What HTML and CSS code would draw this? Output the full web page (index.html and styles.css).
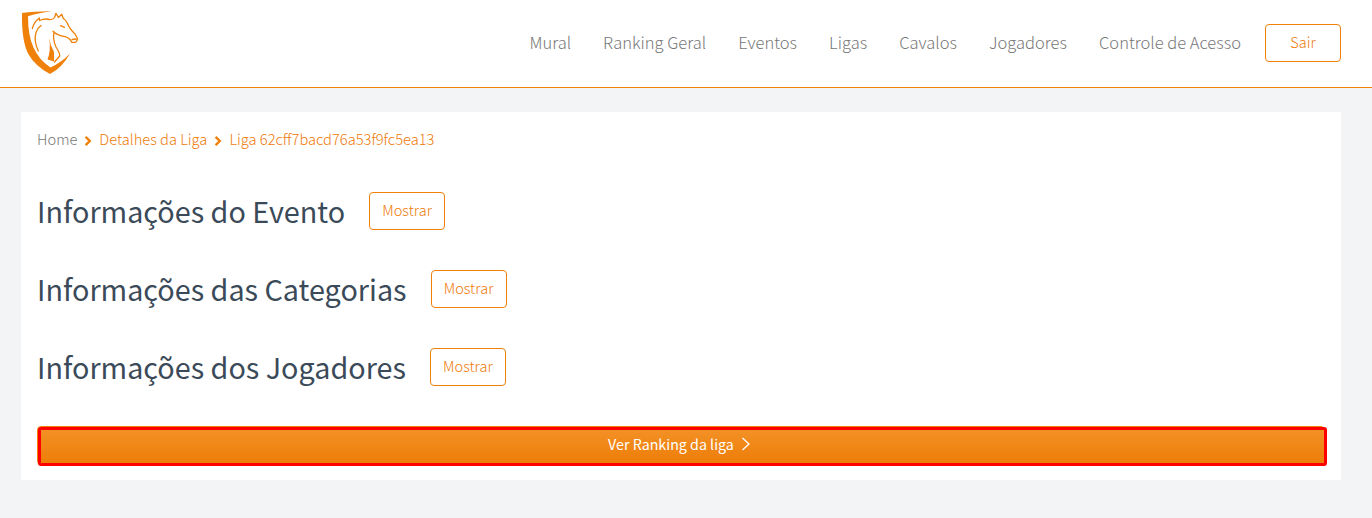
FILE: index.html
```html
<!DOCTYPE html>
<html lang="pt-BR">
<head>
<meta charset="utf-8">
<title>Detalhes da Liga</title>
<link rel="stylesheet" href="styles.css">
</head>
<body>
<header class="topbar">
  <svg class="logo" viewBox="0 0 60 65" width="60" height="65" fill="none" stroke="#ef8009" stroke-linecap="round" stroke-linejoin="round">
    <path fill="#ef8009" stroke="none" d="M2 3Q15 1 32 1.2Q17 3 8 6.2Q8 26 13.5 37.5Q19 50 30.5 57.5Q42 52 50 43.5Q42 58 30 64Q15 56 8.3 44Q1.500 31 2 3Z"/>
    <path stroke-width="1.3" d="M18.300 41Q13.500 31 16 22.500Q17.500 18 21 15.500M12.300 18.500Q14 12 19.300 8L19.500 10.500Q25 8 30 9.700Q33 9.700 34.500 7.500L36 3.300L38.500 7.500L41.700 4.300L43.300 8.500Q46 10 47.500 13.500Q49 18 55 24L57.500 28.500Q57 32 55 32.300L51.700 32.300Q50 28 45 26.700Q37 25.500 33 21.300M40.500 15.700L44.500 17.300M52 29.500L56 29"/>
    <path stroke-width="1.300" d="M34 22.500Q32.500 29 36 37Q40 43 39.700 46L34.500 52"/>
    <path fill="#ef8009" stroke="none" d="M29.300 28Q30 35 34 42L34 51.500L27.500 49.500Q31 41 29.300 28Z"/>
  </svg>
  <nav class="menu">
    <a>Mural</a><a>Ranking Geral</a><a>Eventos</a><a>Ligas</a><a>Cavalos</a><a>Jogadores</a><a>Controle de Acesso</a>
  </nav>
  <button class="btn">Sair</button>
</header>
<main class="panel">
  <div class="crumbs">
    <a class="home">Home</a>
    <svg class="sep" viewBox="0 0 8 12" width="8" height="12"><path d="M1.600 1.800L5.800 6L1.600 10.200"/></svg>
    <a>Detalhes da Liga</a>
    <svg class="sep" viewBox="0 0 8 12" width="8" height="12"><path d="M1.600 1.800L5.800 6L1.600 10.200"/></svg>
    <a>Liga 62cff7bacd76a53f9fc5ea13</a>
  </div>
  <section class="row"><h2>Informações do Evento</h2><button class="btn">Mostrar</button></section>
  <section class="row"><h2>Informações das Categorias</h2><button class="btn">Mostrar</button></section>
  <section class="row"><h2>Informações dos Jogadores</h2><button class="btn">Mostrar</button></section>
  <button class="ranking"><span>Ver Ranking da liga</span><svg viewBox="0 0 10 14" width="10" height="14"><path d="M1.500 1L8 7L1.500 13"/></svg></button>
</main>
</body>
</html>
```
FILE: styles.css
```css
* { box-sizing: border-box; }
body {
  margin: 0;
  background: #f3f4f6;
  font-family: "Noto Sans CJK SC", "Noto Sans", sans-serif;
  color: #3b4a59;
}
.topbar {
  display: flex;
  align-items: center;
  height: 88px;
  padding: 0 31px 2px 20px;
  background: #fff;
  border-bottom: 1px solid #ef8009;
}
.menu {
  display: flex;
  gap: 32px;
  margin: 0 24px 2px auto;
  font-size: 16.53px;
  font-weight: 300;
  line-height: 24px;
  color: #777;
}
.menu a, .btn, .crumbs a, h2, .ranking span { white-space: nowrap; }
.btn {
  width: 76px;
  height: 38px;
  padding: 0 0 2px;
  border: 1px solid #ef8009;
  border-radius: 4px;
  background: #fff;
  font: 300 14.6px/20px "Noto Sans CJK SC", "Noto Sans", sans-serif;
  color: #ef7a09;
}
.panel {
  width: 1320px;
  height: 368px;
  margin: 24px 0 0 21px;
  padding: 16px 14px 14px 16px;
  background: #fff;
}
.crumbs {
  display: flex;
  align-items: center;
  height: 24px;
  padding-bottom: 2px;
  font-size: 14.68px;
  font-weight: 300;
  line-height: 22px;
  color: #ef7a09;
}
.crumbs .home { color: #777; }
.sep { margin: 4px 7px 0; }
.sep path { fill: none; stroke: #ef8009; stroke-width: 2.4; }
.row {
  display: flex;
  align-items: center;
  gap: 24px;
  height: 38px;
  margin-top: 40px;
}
h2 {
  margin: 0;
  font-size: 28.75px;
  font-weight: 400;
  line-height: 36px;
}
.ranking {
  position: relative;
  display: flex;
  align-items: center;
  justify-content: center;
  gap: 7px;
  width: 1288px;
  height: 39px;
  margin-top: 40px;
  padding: 0 3px 3px 0;
  border: 1px solid #ef8009;
  border-radius: 4px;
  background: linear-gradient(#f39228, #ee7d07);
  font: 400 14.25px/20px "Noto Sans CJK SC", "Noto Sans", sans-serif;
  color: #fff;
}
/* Highlight frame, slightly offset from the button */
.ranking::after {
  content: "";
  position: absolute;
  inset: 0 -3px -2px 0;
  border: 3px solid #f00;
  border-radius: 3px;
}
.ranking path { fill: none; stroke: #fff; stroke-width: 1.3; }
```
